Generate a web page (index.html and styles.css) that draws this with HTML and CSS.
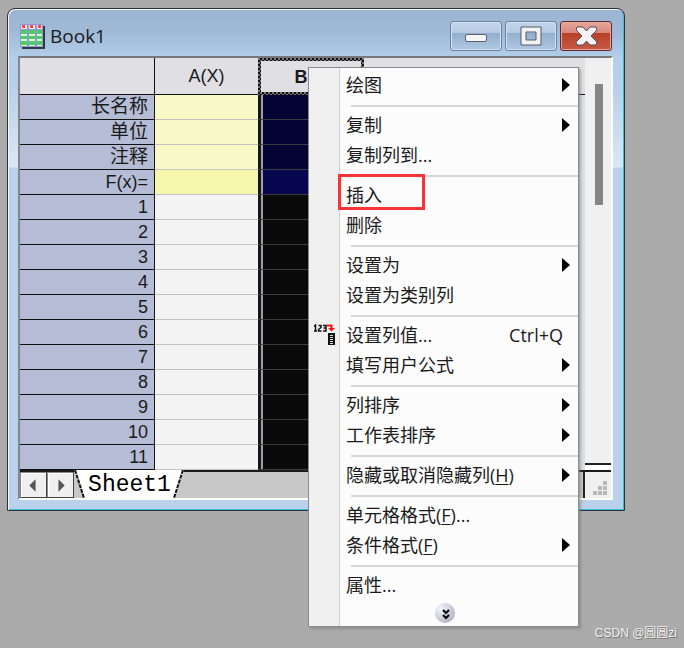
FILE: index.html
```html
<!DOCTYPE html>
<html lang="zh-CN">
<head>
<meta charset="utf-8">
<title>Book1</title>
<link rel="stylesheet" href="styles.css">
</head>
<body>
<main class="window">
  <header class="titlebar">
    <svg class="book-icon" viewBox="0 0 25 25" aria-hidden="true">
      <path fill="#333a40" d="M2 2h23v23H2z"/>
      <path fill="#8f98d0" d="M0 0h23v23H0z"/>
      <path fill="#fbe3e3" d="M1 1h6v4H1zM9 1h6v4H9zM17 1h5v4h-5z"/>
      <path fill="#f44" d="M2 1h3v3H2zM10 1h3v3h-3zM18 1h3v3h-3z"/>
      <path fill="#4ccf5c" d="M1 6h6v4H1zM9 6h6v4H9zM17 6h5v4h-5zM1 12h6v3H1zM9 12h6v3H9zM17 12h5v3h-5zM1 17h6v4H1zM9 17h6v4H9zM17 17h5v4h-5z"/>
      <path fill="#d5f8d8" d="M1 10h6v2H1zM9 10h6v2H9zM17 10h5v2h-5zM1 15h6v2H1zM9 15h6v2H9zM17 15h5v2h-5zM1 21h6v1H1zM9 21h6v1H9zM17 21h5v1h-5z"/>
    </svg>
    <h1 class="title">Book1</h1>
    <div class="controls">
      <button class="control" aria-label="最小化"><svg viewBox="0 0 50 28"><rect x="14.500" y="12.500" width="21" height="7" rx="1.500" fill="#f5f5f5" stroke="#5b6070"/></svg></button>
      <button class="control" aria-label="最大化"><svg viewBox="0 0 50 28"><path fill="#f2f2f2" stroke="#535a69" fill-rule="evenodd" d="M15 5h20v18H15zM20 10v8h10v-8z"/></svg></button>
      <button class="control close" aria-label="关闭"><svg viewBox="0 0 50 28"><path fill="#f4f4f4" stroke="#5a4a54" stroke-linejoin="round" d="M16 5h6l3.500 4L29 5h6l1 3-6 6 6 6-1 3h-6l-3.500-4-3.500 4h-6l-1-3 6-6-6-6z"/></svg></button>
    </div>
  </header>
  <div class="client">
    <div class="workspace">
      <table class="sheet">
        <thead><tr><th class="corner"></th><th class="col-a">A(X)</th><th class="col-b">B(Y)</th><th></th></tr></thead>
        <tbody>
          <tr class="meta"><th>长名称</th><td></td><td></td><td></td></tr>
          <tr class="meta"><th>单位</th><td></td><td></td><td></td></tr>
          <tr class="meta"><th>注释</th><td></td><td></td><td></td></tr>
          <tr class="formula"><th>F(x)=</th><td></td><td></td><td></td></tr>
          <tr><th>1</th><td></td><td></td><td></td></tr>
          <tr><th>2</th><td></td><td></td><td></td></tr>
          <tr><th>3</th><td></td><td></td><td></td></tr>
          <tr><th>4</th><td></td><td></td><td></td></tr>
          <tr><th>5</th><td></td><td></td><td></td></tr>
          <tr><th>6</th><td></td><td></td><td></td></tr>
          <tr><th>7</th><td></td><td></td><td></td></tr>
          <tr><th>8</th><td></td><td></td><td></td></tr>
          <tr><th>9</th><td></td><td></td><td></td></tr>
          <tr><th>10</th><td></td><td></td><td></td></tr>
          <tr><th>11</th><td></td><td></td><td></td></tr>
        </tbody>
      </table>
      <div class="scroll"><div class="thumb"></div><div class="splitter"></div></div>
    </div>
    <footer class="tabs">
      <button class="step" aria-label="上一个"><svg viewBox="0 0 24 24"><path fill="#555" d="M14 6v12l-6-6z"/></svg></button>
      <button class="step" aria-label="下一个"><svg viewBox="0 0 24 24"><path fill="#555" d="M10 6v12l6-6z"/></svg></button>
      <button class="tab"><svg viewBox="0 0 111 28" aria-hidden="true"><path fill="#fff" d="M0 0h110l-9 28H10z"/><path fill="none" stroke="#111" stroke-width="2" stroke-dasharray="4 1" d="M1 0l9 28M109 0l-9 28"/></svg><span>Sheet1</span></button>
      <div class="track"></div>
      <div class="grip"><svg viewBox="0 0 16 16" aria-hidden="true"><path fill="#b8b8b8" d="M10 0h4v4h-4zM5 5h4v4H5zM10 5h4v4h-4zM0 10h4v4H0zM5 10h4v4H5zM10 10h4v4h-4z"/></svg></div>
    </footer>
  </div>
</main>

<div class="menu" role="menu">
  <div class="group">
    <button role="menuitem" class="item sub">绘图</button>
  </div>
  <div class="group">
    <button role="menuitem" class="item sub">复制</button>
    <button role="menuitem" class="item">复制列到...</button>
  </div>
  <div class="group">
    <button role="menuitem" class="item marked">插入</button>
    <button role="menuitem" class="item">删除</button>
  </div>
  <div class="group">
    <button role="menuitem" class="item sub">设置为</button>
    <button role="menuitem" class="item">设置为类别列</button>
  </div>
  <div class="group">
    <button role="menuitem" class="item"><svg class="item-icon" viewBox="0 0 22 22" aria-hidden="true">
      <path fill="none" stroke="#111" stroke-width="1.500" d="M0 2.500l1.500-1.500v6M0 7h3M4.500 1.500h2.500v2l-2.500 2v1.500h3M9 1.500h3v5.500H9M9.500 4H12"/>
      <path fill="none" stroke="#f11" stroke-width="2" d="M13 1.500h4.500v3"/><path fill="#f11" d="M14 4h7l-3.500 3.500z"/>
      <path fill="#111" d="M14 9h7v12h-7z"/><path fill="#ddd" d="M16 11h3v1h-3zM16 13h3v1h-3zM16 15h3v1h-3zM16 17h3v1h-3zM16 19h3v1h-3z"/>
    </svg>设置列值...<kbd>Ctrl+Q</kbd></button>
    <button role="menuitem" class="item sub">填写用户公式</button>
  </div>
  <div class="group">
    <button role="menuitem" class="item sub">列排序</button>
    <button role="menuitem" class="item sub">工作表排序</button>
  </div>
  <div class="group">
    <button role="menuitem" class="item sub">隐藏或取消隐藏列(<u>H</u>)</button>
  </div>
  <div class="group">
    <button role="menuitem" class="item">单元格格式(<u>F</u>)...</button>
    <button role="menuitem" class="item sub">条件格式(<u>F</u>)</button>
  </div>
  <div class="group">
    <button role="menuitem" class="item">属性...</button>
  </div>
  <button class="expand" aria-label="展开"><svg viewBox="0 0 20 20"><defs><radialGradient id="ball" cx="30%" cy="30%" r="75%"><stop offset="0" stop-color="#f6f6fb"/><stop offset="1" stop-color="#b4b4cc"/></radialGradient></defs><circle cx="10" cy="10" r="10" fill="url(#ball)"/><path fill="none" stroke="#000" stroke-width="2" d="M8 7l3 3 3-3M8 12l3 3 3-3"/></svg></button>
</div>
<p class="credit">CSDN @圆圆zi</p>
</body>
</html>
```
FILE: styles.css
```css
*, *::before, *::after { box-sizing: border-box; }

body {
  position: relative;
  margin: 0;
  min-height: 100vh;
  padding: 8px 59px 0 7px;
  background: #ababab;
  color: #1a1a1a;
  font: 18px/24px "Liberation Sans", "Noto Sans CJK SC", sans-serif;
}

button {
  margin: 0;
  padding: 0;
  border: 0;
  background: none;
  color: inherit;
  font: inherit;
}

svg { display: block; }

.window {
  padding: 0 11px 10px 10px;
  border: 1px solid #2a3138;
  border-radius: 8px 8px 0 0;
  background: linear-gradient(#9ab4d2, #a0bad8 24px, #b4cfea 50px, #b8d0ea 80px, #dbe7f5 158px, #b9d1ea 159px);
  box-shadow: inset 1px 1px #f2f8fd, inset -1px -1px #35c0d8;
}

.titlebar {
  display: flex;
  align-items: center;
  height: 47px;
  padding: 7px 1px 0 2px;
}

.book-icon { width: 25px; height: 25px; }

.title {
  flex: 1;
  margin: 0 0 0 5px;
  font: 19px/24px "Open Sans", sans-serif;
}

.controls { display: flex; gap: 3px; }

.control {
  width: 52px;
  height: 30px;
  border: 1px solid #6d809c;
  border-radius: 3px;
  background: linear-gradient(#c4d5ea, #b5cae2 38%, #93afce 40%, #b0c8e2);
  box-shadow: inset 0 0 0 1px #d3e2f2;
}

.control.close {
  border-color: #5e2838;
  background: linear-gradient(#e5a79b, #d98a7c 38%, #b8402a 40%, #c55a45);
  box-shadow: inset 0 0 0 1px #e5a79b;
}

.client {
  border: solid #fff;
  border-width: 2px;
  border-top-color: #77777c;
  border-left-color: #85858a;
  background: #f0f0f0;
}

.workspace { display: flex; border-bottom: 2px solid #1a1a1a; }

.sheet {
  flex: 1;
  table-layout: fixed;
  width: 0;
  border-spacing: 0;
  background: #dedee6;
}

.sheet th, .sheet td { height: 25px; padding: 0; font-weight: 400; }
.sheet thead th { height: 37px; border-bottom: 1px solid #111; background: #e0dfe4; }
.sheet thead .corner { width: 135px; border-right: 1px solid #111; }
.sheet thead .col-a { width: 103px; }

.sheet thead .col-b {
  width: 106px;
  padding-left: 4px;
  border: 3px solid transparent;
  background:
    linear-gradient(#e0dfe4, #e0dfe4) padding-box,
    repeating-conic-gradient(#111 0 25%, #777 0 50%) 0 0 / 4px 4px border-box;
  font-weight: 700;
}

.sheet tbody th {
  padding-right: 6px;
  border-right: 1px solid #111;
  border-bottom: 1px solid #111;
  background: #b5bcd5;
  text-align: right;
}

.sheet .meta th { font-size: 19px; line-height: 22px; }
.sheet tbody td:nth-child(2) { border-bottom: 1px solid #c2c2c2; background: #f4f4f4; }
.sheet .meta td:nth-child(2) { background: #fafac8; }
.sheet .formula td:nth-child(2) { background: #f6f6ad; }

.sheet tbody td:nth-child(3) {
  border-bottom: 1px solid #3c3c3c;
  background: #0a0a0a;
  box-shadow: inset 3px 0 #16161c, inset 5px 0 #a0a0a0;
}

.sheet .meta td:nth-child(3) { background: #040435; }
.sheet .formula td:nth-child(3) { background: #07074f; }

.scroll {
  display: flex;
  flex-direction: column;
  width: 26px;
  padding-top: 26px;
}

.thumb { width: 8px; height: 121px; margin-left: 10px; background: #858585; }
.splitter { height: 7px; margin-top: auto; border-top: 2px solid #222; background: #fff; }

.tabs { display: flex; height: 26px; background: #c8c8c8; }

.step {
  width: 27px;
  border: 1px solid #888;
  border-right-color: #444;
  border-bottom-color: #444;
  background: #efefef;
  box-shadow: inset 1px 1px #fff;
}

.tab { position: relative; width: 111px; font: 23px/26px "Liberation Mono", monospace; color: #000; }
.tab svg { position: absolute; inset: auto 0 0; }
.tab span { position: relative; }
.track { flex: 1; }

.grip {
  display: flex;
  align-items: flex-end;
  justify-content: flex-end;
  width: 28px;
  padding: 0 2px 1px 0;
  border-left: 2px solid #222;
  background: #f0f0f0;
}

.grip svg { width: 16px; height: 16px; }

.menu {
  position: absolute;
  top: 67px;
  left: 308px;
  width: 271px;
  padding-top: 2px;
  border: 1px solid #8c8c8c;
  background: linear-gradient(90deg, #f0f0f0 30px, #d0d0d0 30px 31px, #fcfcfc 31px);
  box-shadow: 2px 2px 2px #7778;
  font: 18px/30px "Open Sans", "Noto Sans CJK SC", sans-serif;
}

.group + .group { padding-top: 10px; }

.group + .group::before {
  content: "";
  display: block;
  height: 2px;
  margin: -5px 0 3px 42px;
  background: #d5d7d7;
}

.item {
  position: relative;
  display: flex;
  align-items: center;
  width: 100%;
  height: 30px;
  padding: 0 15px 0 37px;
  white-space: nowrap;
}

.item kbd { margin-left: auto; font: inherit; }
.item u { text-underline-offset: 2px; text-decoration-thickness: 1px; }

.item.sub { padding-right: 8px; }

.item.sub::after {
  content: "";
  margin-left: auto;
  border: solid transparent;
  border-width: 7px 0 7px 8px;
  border-left-color: #000;
}

.item.marked::after {
  content: "";
  position: absolute;
  inset: -6px auto auto 29px;
  width: 87px;
  height: 36px;
  border: 3px solid #f93439;
}

.item-icon { position: absolute; left: 5px; width: 22px; height: 22px; }

.expand { display: block; width: 20px; height: 26px; margin-left: 126px; }
.expand svg { width: 20px; height: 20px; }

.credit {
  position: absolute;
  right: 7px;
  bottom: 5px;
  margin: 0;
  color: #f0f0f0;
  font: 12px/20px "Liberation Sans", "Noto Sans CJK SC", sans-serif;
  text-shadow: 1px 1px #777;
}
```
